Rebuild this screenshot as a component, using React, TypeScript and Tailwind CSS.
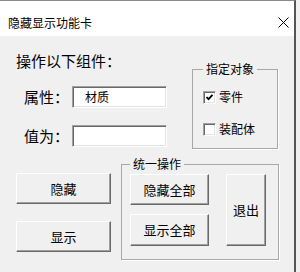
import React from "react";

const font = { fontFamily: '"Noto Sans CJK SC", "Noto Sans", sans-serif' };

function Btn({ children, className }: { children: React.ReactNode; className: string }) {
  return (
    <div
      className={`flex items-center justify-center bg-[#f0f0f0] border-t border-l border-white border-b border-r border-b-[#696969] border-r-[#696969] shadow-[inset_-1px_-1px_0_#a0a0a0] text-[13px] text-black ${className}`}
    >
      {children}
    </div>
  );
}

function Input({ value }: { value?: string }) {
  return (
    <div className="w-[95px] h-[22px] bg-white border-t border-l border-[#a0a0a0] border-b border-r border-b-white border-r-white shadow-[inset_1px_1px_0_#696969,inset_-1px_-1px_0_#e3e3e3] flex items-center pl-[12px] text-[12px] text-black leading-none">
      {value}
    </div>
  );
}

function Check({ checked, label }: { checked: boolean; label: string }) {
  return (
    <div className="flex items-center h-[16px]">
      <div className="w-[13px] h-[13px] bg-white border-t border-l border-[#a0a0a0] border-b border-r border-b-white border-r-white shadow-[inset_1px_1px_0_#696969,inset_-1px_-1px_0_#e3e3e3] flex items-center justify-center">
        {checked && (
          <svg width="9" height="9" viewBox="0 0 9 9">
            <path d="M1.5 4 L3.5 6.2 L7.5 1.8" stroke="#000" strokeWidth="1.8" fill="none" />
          </svg>
        )}
      </div>
      <span className="ml-[3px] text-[12px] text-black leading-[16px]">{label}</span>
    </div>
  );
}

export default function App() {
  return (
    <div className="w-[300px] h-[272px] bg-[#f0f0f0] flex" style={font}>
      <div className="w-[296px] h-[272px] flex flex-col border-t border-t-[#8a8a8a] border-r-2 border-r-[#555555]">
        <div className="h-[35px] bg-white flex items-center justify-between pt-[8px] pl-[8px] pr-[5px]">
          <span className="text-[12px] text-black leading-none">隐藏显示功能卡</span>
          <svg width="11" height="11" viewBox="0 0 11 11">
            <path d="M0.5 0.5 L10.5 10.5 M10.5 0.5 L0.5 10.5" stroke="#000" strokeWidth="1" />
          </svg>
        </div>
        <div className="flex-1 bg-[#f0f0f0] flex flex-col">
          <div className="flex items-start">
            <div className="flex flex-col pl-[16px]">
              <div className="mt-[15px] text-[15px] leading-[20px] text-black">操作以下组件：</div>
              <div className="mt-[15px] flex items-center">
                <span className="pl-[8px] w-[56px] text-[15px] leading-[20px] text-black">属性：</span>
                <Input value="材质" />
              </div>
              <div className="mt-[17px] flex items-center">
                <span className="pl-[8px] w-[56px] text-[15px] leading-[20px] text-black">值为：</span>
                <Input />
              </div>
            </div>
            <fieldset className="ml-[25px] mt-[25px] w-[86px] h-[88px] border border-[#a8a8a8] shadow-[1px_1px_0_#ffffff]">
              <legend className="ml-[10px] px-[3px] text-[12px] leading-[16px] text-black">指定对象</legend>
              <div className="pl-[10px] pt-[12px] flex flex-col gap-[16px]">
                <Check checked label="零件" />
                <Check checked={false} label="装配体" />
              </div>
            </fieldset>
          </div>
          <div className="flex items-start">
            <div className="ml-[16px] mt-[24px] flex flex-col gap-[17px]">
              <Btn className="w-[95px] h-[31px]">隐藏</Btn>
              <Btn className="w-[95px] h-[31px]">显示</Btn>
            </div>
            <fieldset className="ml-[10px] mt-[7px] w-[158px] h-[104px] border border-[#a8a8a8] shadow-[1px_1px_0_#ffffff]">
              <legend className="ml-[8px] px-[3px] text-[12px] leading-[16px] text-black">统一操作</legend>
              <div className="pl-[8px] pt-[2px] flex items-start gap-[17px]">
                <div className="flex flex-col gap-[9px]">
                  <Btn className="w-[79px] h-[31px]">隐藏全部</Btn>
                  <Btn className="w-[79px] h-[32px]">显示全部</Btn>
                </div>
                <Btn className="w-[40px] h-[72px]">退出</Btn>
              </div>
            </fieldset>
          </div>
        </div>
      </div>
    </div>
  );
}
